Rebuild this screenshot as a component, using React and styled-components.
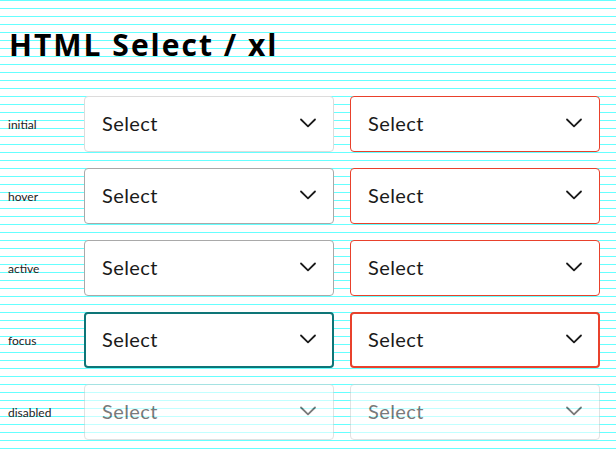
import React from "react";
import styled, { createGlobalStyle, css } from "styled-components";

const GlobalStyle = createGlobalStyle`
    html, body {
        margin: 0;
        padding: 0;
    }
    body {
        background: repeating-linear-gradient(
            to bottom,
            #66ffff 0px,
            #66ffff 1px,
            #ffffff 1px,
            #ffffff 8px
        );
        min-height: 456px;
        font-family: "Lato", "Noto Sans", sans-serif;
        color: #1a1a1a;
    }
`

const StyledPage = styled.div`
    padding: 0 16px 0 8px;
`

const StyledTitle = styled.h1`
    margin: 0;
    padding: 25px 0 0 1px;
    height: 96px;
    box-sizing: border-box;
    font-family: "Open Sans", "Lato", sans-serif;
    font-size: 30px;
    line-height: 40px;
    font-weight: 700;
    letter-spacing: 2px;
    color: #000;
`

const StyledGrid = styled.div`
    display: grid;
    grid-template-columns: 60px 1fr 1fr;
    column-gap: 16px;
    row-gap: 16px;
    grid-auto-rows: 56px;
`

const StyledLabel = styled.div`
    display: flex;
    align-items: center;
    font-size: 12px;
    color: #222;
`

const borderFor = (state, error) => {
    if (state === "focus") {
        return css`border: 2px solid ${error ? "#e8412c" : "#0e7577"};`;
    }
    if (error) return css`border: 1px solid #e8412c;`;
    if (state === "hover" || state === "active") return css`border: 1px solid #a9a9a9;`;
    return css`border: 1px solid #dcdcdc;`;
}

const StyledSelect = styled.div`
    display: flex;
    align-items: center;
    justify-content: space-between;
    box-sizing: border-box;
    height: 56px;
    padding: 0 ${props => props.state === "focus" ? 15 : 16}px 2px ${props => props.state === "focus" ? 16 : 17}px;
    background: #fff;
    border-radius: 4px;
    font-size: 20px;
    letter-spacing: 0.4px;
    color: #1a1a1a;
    ${props => borderFor(props.state, props.error)}

    ${props => props.state === "disabled" && css`
        opacity: 0.6;
        border-color: #cfcfcf;
        color: #222;
    `}
`

const StyledChevron = styled.svg`
    width: 18px;
    height: 10px;
    flex-shrink: 0;
`

const Chevron = () => (
    <StyledChevron viewBox="0 0 18 10">
        <path d="M2 1.5 L9 8.3 L16 1.5" fill="none" stroke="currentColor" strokeWidth="1.8" strokeLinecap="round" strokeLinejoin="round" />
    </StyledChevron>
)

const states = ["initial", "hover", "active", "focus", "disabled"];

export default class App extends React.Component {
    render() {
        return (
            <StyledPage>
                <GlobalStyle />
                <StyledTitle>HTML Select / xl</StyledTitle>
                <StyledGrid>
                    {states.map(state => (
                        <React.Fragment key={state}>
                            <StyledLabel>{state}</StyledLabel>
                            <StyledSelect state={state}>
                                Select
                                <Chevron />
                            </StyledSelect>
                            <StyledSelect state={state} error>
                                Select
                                <Chevron />
                            </StyledSelect>
                        </React.Fragment>
                    ))}
                </StyledGrid>
            </StyledPage>
        )
    }
}
